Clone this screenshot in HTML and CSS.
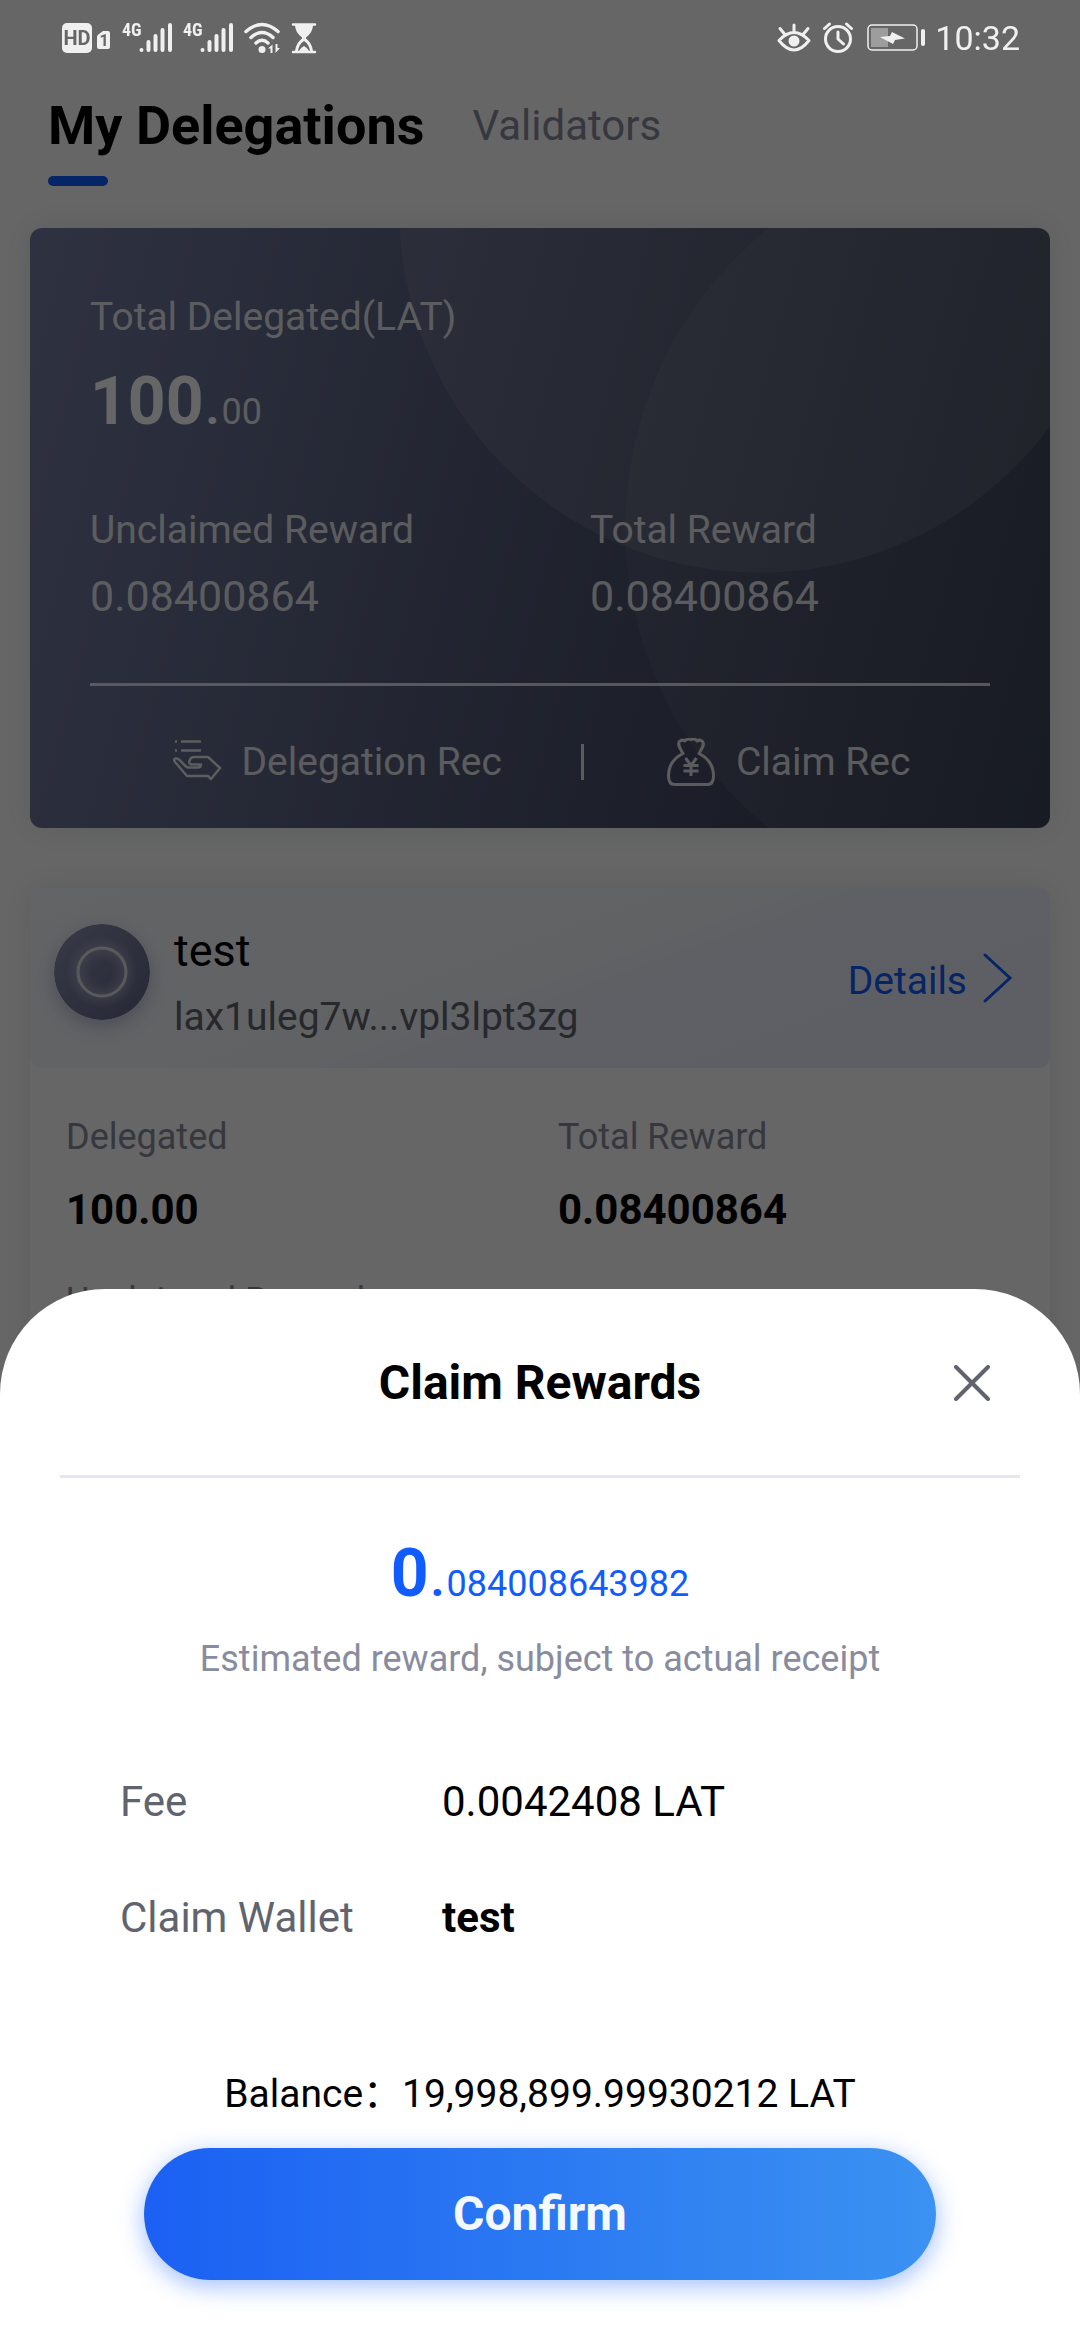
FILE: index.html
```html
<!DOCTYPE html>
<html lang="en">
<head>
<meta charset="utf-8">
<meta name="viewport" content="width=device-width, initial-scale=1">
<title>My Delegations</title>
<link rel="stylesheet" href="styles.css">
</head>
<body>
<header class="status-bar">
  <div class="status-group">
    <svg width="50" height="32" viewBox="0 0 50 32" aria-hidden="true">
      <rect x="0" y="1" width="30" height="30" rx="5" fill="currentColor"/>
      <text x="15" y="23" class="badge-text">HD</text>
      <path d="M35 15q0-2 2-3l4-3h5q2 0 2 2v14q0 2-2 2h-9q-2 0-2-2z" fill="currentColor"/>
      <text x="42" y="24" class="badge-text badge-text-small">1</text>
    </svg>
    <svg width="51" height="44" viewBox="0 -6 51 44" aria-hidden="true">
      <text x="0" y="14" class="network-text">4G</text>
      <path d="M19.500 28v0M26.500 20v8M33.500 14v14M40.500 8v20M48 3v25" class="bars"/>
    </svg>
    <svg width="51" height="44" viewBox="0 -6 51 44" aria-hidden="true">
      <text x="0" y="14" class="network-text">4G</text>
      <path d="M19.500 28v0M26.500 20v8M33.500 14v14M40.500 8v20M48 3v25" class="bars"/>
    </svg>
    <svg width="36" height="32" viewBox="0 0 36 32" aria-hidden="true">
      <path d="M2 9.500q16-14 32 0M7 15.500q11-10 22 0M12 21q6-5.500 12 0" fill="none" stroke="currentColor" stroke-width="3.500" stroke-linecap="round"/>
      <circle cx="18" cy="27.500" r="3.500" fill="currentColor"/>
      <path d="M24 26.500l4.500-4v8.500h-2v-4.500zM36 26l-4.500 5v-9h2v4z" fill="currentColor"/>
    </svg>
    <svg width="28" height="32" viewBox="0 0 28 32" aria-hidden="true">
      <path d="M3 2.500h22M3 30h22" stroke="currentColor" stroke-width="2.500" stroke-linecap="round"/>
      <path d="M5 3h18q0 7-7 12.500v1Q22 21 23 29h-3q-1-7-6-10-5 3-6 10H5q1-8 7-12.500v-1Q5 10 5 3z" fill="currentColor"/>
      <path d="M9 29q1-3 5-5 4 2 5 5z" fill="currentColor"/>
    </svg>
  </div>
  <div class="status-group">
    <svg width="34" height="32" viewBox="0 0 34 32" aria-hidden="true">
      <path d="M2 18.500Q17 2.500 32 18.500 17 37.500 2 18.500zM17 9V3M7.500 12L3 6.500M26.500 12L31 6.500" fill="none" stroke="currentColor" stroke-width="3" stroke-linecap="round" stroke-linejoin="round"/>
      <circle cx="17" cy="19" r="5.500" fill="currentColor"/>
    </svg>
    <svg width="36" height="32" viewBox="0 0 36 32" aria-hidden="true">
      <circle cx="17" cy="17" r="12.500" fill="none" stroke="currentColor" stroke-width="3"/>
      <path d="M17 10v7l5.500 5M3.500 6.500L8.500 2M30.500 6.500L25.500 2" fill="none" stroke="currentColor" stroke-width="3" stroke-linecap="round" stroke-linejoin="round"/>
    </svg>
    <svg width="58" height="32" viewBox="0 0 58 32" aria-hidden="true">
      <rect x="1" y="3" width="49" height="25" rx="4" fill="none" stroke="currentColor" stroke-width="1.500"/>
      <rect x="4" y="6" width="17" height="19" fill="currentColor" opacity=".4"/>
      <path d="M13 15l10-1 2-4 13 6.500-10 1.500-2 4z" fill="currentColor"/>
      <rect x="54" y="7" width="4" height="17" rx="2" fill="currentColor"/>
    </svg>
    <time class="clock">10:32</time>
  </div>
</header>

<main class="page">
  <nav class="tabs">
    <button type="button" class="tab tab-active">My Delegations</button>
    <button type="button" class="tab">Validators</button>
  </nav>

  <section class="summary">
    <h2 class="summary-label">Total Delegated(LAT)</h2>
    <p class="amount summary-total"><strong>100<span class="point">.</span></strong><span class="decimals">00</span></p>
    <dl class="summary-stats">
      <div><dt class="summary-label">Unclaimed Reward</dt><dd>0.08400864</dd></div>
      <div><dt class="summary-label">Total Reward</dt><dd>0.08400864</dd></div>
    </dl>
    <div class="summary-actions">
      <a href="#delegations" class="record-link">
        <svg width="54" height="48" viewBox="-3 0 54 48" aria-hidden="true">
          <path d="M2 3.500h2M8 3.500h20M2 12.500h2M8 12.500h20" stroke="currentColor" stroke-width="2.500" fill="none"/>
          <path d="M28 26.500H18.500q-3-.5-2-3.500 1-4 5-4H35L47 30 38 41l-3-3H14L2 24q-2-3 .5-3.500 2-.5 4 1.500l6 6q2 2 5 1.500h7.500q3 0 3-3z" fill="none" stroke="currentColor" stroke-width="2.500" stroke-linejoin="round"/>
        </svg>
        Delegation Rec
      </a>
      <span class="summary-separator"></span>
      <a href="#claims" class="record-link">
        <svg width="54" height="48" viewBox="-3 0 54 48" aria-hidden="true">
          <path d="M16 15.500C13 10 10 6.500 12.500 3.500q2.500-2.500 5.500-.5 2-3 6-1.500 4-1.500 6 1.500 3-2 5.500.5c2.500 3-.5 6.500-3.500 12C41 20 46.500 28 46.500 38q0 8.500-6 8.500h-33q-6 0-6-8.500C1.500 28 7 20 16 15.500z" fill="none" stroke="currentColor" stroke-width="3" stroke-linejoin="round"/>
          <path d="M18.500 20l5.500 7.500 5.500-7.500M24 27.500V38M16.500 27.500h15M16.500 33h15" fill="none" stroke="currentColor" stroke-width="3"/>
        </svg>
        Claim Rec
      </a>
    </div>
  </section>

  <article class="delegation">
    <header class="delegation-head">
      <svg class="avatar" width="96" height="96" viewBox="0 0 96 96" aria-hidden="true">
        <defs>
          <linearGradient id="avatar-fill" x1="0" y1="0" x2="1" y2="1">
            <stop offset="0" stop-color="#8c91b4"/><stop offset="1" stop-color="#5f6485"/>
          </linearGradient>
          <radialGradient id="avatar-glow">
            <stop offset=".3" stop-color="#aab0c4" stop-opacity="0"/>
            <stop offset=".65" stop-color="#aab0c4" stop-opacity=".6"/>
            <stop offset="1" stop-color="#aab0c4" stop-opacity="0"/>
          </radialGradient>
        </defs>
        <circle cx="48" cy="48" r="48" fill="url(#avatar-fill)"/>
        <circle cx="48" cy="48" r="36" fill="url(#avatar-glow)"/>
        <circle cx="48" cy="48" r="24" fill="none" stroke="#dcdfe0" stroke-width="3"/>
      </svg>
      <div class="wallet">
        <h3>test</h3>
        <p>lax1uleg7w...vpl3lpt3zg</p>
      </div>
      <a href="#details" class="details-link">
        Details
        <svg width="33" height="54" viewBox="0 0 33 54" aria-hidden="true">
          <path d="M4 4l25 23L4 50" fill="none" stroke="currentColor" stroke-width="3" stroke-linecap="round"/>
        </svg>
      </a>
    </header>
    <dl class="delegation-stats">
      <div><dt>Delegated</dt><dd>100.00</dd></div>
      <div><dt>Total Reward</dt><dd>0.08400864</dd></div>
      <div><dt>Unclaimed Reward</dt></div>
    </dl>
  </article>
</main>

<div class="backdrop">
  <section class="sheet" role="dialog" aria-modal="true" aria-labelledby="sheet-title">
    <header class="sheet-head">
      <h1 id="sheet-title">Claim Rewards</h1>
      <button type="button" class="close" aria-label="Close">
        <svg width="36" height="36" viewBox="0 0 36 36" aria-hidden="true">
          <path d="M2 2l32 32M34 2L2 34" stroke="currentColor" stroke-width="4" stroke-linecap="round"/>
        </svg>
      </button>
    </header>
    <p class="amount reward"><strong>0<span class="point">.</span></strong><span class="decimals">084008643982</span></p>
    <p class="reward-note">Estimated reward, subject to actual receipt</p>
    <dl class="claim-info">
      <dt>Fee</dt><dd>0.0042408 LAT</dd>
      <dt>Claim Wallet</dt><dd><strong>test</strong></dd>
    </dl>
    <p class="balance">Balance：19,998,899.99930212 LAT</p>
    <button type="button" class="confirm">Confirm</button>
  </section>
</div>
</body>
</html>
```
FILE: styles.css
```css
* {
  box-sizing: border-box;
  margin: 0;
  padding: 0;
}

body {
  background: #fff;
  color: #000;
  font-family: Roboto, "Noto Sans CJK SC", sans-serif;
  font-size: 39px;
  line-height: 48px;
}

button {
  border: 0;
  background: none;
  font: inherit;
  color: inherit;
}

a {
  color: inherit;
  text-decoration: none;
}

svg {
  display: block;
  flex: none;
}

/* Status bar stays bright above the dimmed page */
.status-bar {
  position: relative;
  z-index: 2;
  display: flex;
  justify-content: space-between;
  height: 76px;
  padding: 0 60px 0 62px;
  color: #f0f0f0;
}

.status-group {
  display: flex;
  align-items: center;
  gap: 10px;
}

.clock {
  font-size: 34px;
}

.badge-text {
  fill: #666;
  font-size: 20px;
  font-weight: 700;
  text-anchor: middle;
}

.badge-text-small {
  font-size: 16px;
}

.network-text {
  fill: currentColor;
  font-family: "Roboto Condensed", "Liberation Sans Narrow", "DejaVu Sans Condensed", Roboto, sans-serif;
  font-size: 18px;
  font-weight: 700;
}

.bars {
  fill: none;
  stroke: currentColor;
  stroke-width: 4;
  stroke-linecap: round;
}

/* Large whole part followed by small decimals */
.amount {
  font-size: 66px;
  line-height: 78px;
}

.point {
  margin: 0 2px;
  font-size: 48px;
  line-height: 48px;
}

.decimals {
  font-size: 36px;
  line-height: 36px;
}

.page {
  padding: 18px 30px 0;
}

.tabs {
  display: flex;
  align-items: flex-start;
  gap: 48px;
  padding: 0 18px;
}

.tab {
  color: #898c9e;
  font-size: 42px;
  line-height: 64px;
}

.tab-active {
  color: #000;
  font-size: 54px;
  font-weight: 700;
}

.tab-active::after {
  content: "";
  display: block;
  width: 60px;
  height: 10px;
  margin-top: 18px;
  border-radius: 5px;
  background: #105cfe;
}

.summary {
  margin-top: 42px;
  padding: 65px 60px 0;
  border-radius: 12px;
  background:
    radial-gradient(circle 361px at calc(100% - 290px) -16px, rgba(255, 255, 255, .09) 360px, transparent 361px),
    radial-gradient(circle 386px at calc(100% - 39px) 300px, rgba(255, 255, 255, .05) 385px, transparent 386px),
    linear-gradient(105deg, #757ca3, #525a76 50%, #434a62 75%, #323a4e);
  box-shadow: 0 0 30px rgba(60, 66, 90, .12);
  color: #fff;
}

.summary-label {
  color: rgba(255, 255, 255, .85);
  font-size: 39px;
  font-weight: 400;
}

.summary-total {
  margin-top: 22px;
}

.summary-total .decimals {
  color: rgba(255, 255, 255, .85);
}

.summary-stats {
  display: grid;
  grid-template-columns: 1fr 1fr;
  gap: 100px;
  margin-top: 65px;
}

.summary-stats dd {
  margin-top: 18px;
  color: rgba(255, 255, 255, .85);
  font-size: 43px;
}

.summary-actions {
  display: flex;
  justify-content: space-evenly;
  align-items: center;
  margin-top: 63px;
  padding: 52px 0 42px;
  border-top: 3px solid rgba(255, 255, 255, .8);
  color: rgba(255, 255, 255, .85);
}

.record-link {
  display: flex;
  align-items: center;
  gap: 18px;
}

.summary-separator {
  width: 3px;
  height: 36px;
  background: currentColor;
}

.delegation {
  margin-top: 60px;
  padding-bottom: 240px;
  border-radius: 12px;
  background: #fff;
  box-shadow: 0 0 30px rgba(60, 66, 90, .12);
}

.delegation-head {
  display: flex;
  align-items: flex-start;
  gap: 24px;
  height: 180px;
  padding: 36px 36px 0 24px;
  border-radius: 12px;
  background: linear-gradient(160deg, #f5f9fd, #f1f6fb 48%, #eaeffc 58%, #ebedfa);
}

.avatar {
  border-radius: 50%;
  box-shadow: 0 6px 18px rgba(80, 90, 150, .35);
}

.wallet {
  flex: 1;
  color: #61646e;
}

.wallet h3 {
  margin-bottom: 15px;
  color: #000;
  font-size: 45px;
  font-weight: 400;
  line-height: 54px;
}

.details-link {
  display: flex;
  align-items: flex-end;
  align-self: center;
  gap: 14px;
  margin-top: -36px;
  color: #105cfe;
}

.delegation-stats {
  display: grid;
  grid-template-columns: 1fr 1fr;
  gap: 46px 36px;
  padding: 48px 36px 0;
}

.delegation-stats dt {
  color: #898c9e;
  font-size: 36px;
  line-height: 42px;
}

.delegation-stats dd {
  margin-top: 28px;
  font-size: 42px;
  font-weight: 700;
}

/* Dimmed layer with the claim sheet at its foot */
.backdrop {
  position: fixed;
  inset: 0;
  z-index: 1;
  display: flex;
  flex-direction: column;
  justify-content: flex-end;
  background: rgba(0, 0, 0, .6);
}

.sheet {
  display: flex;
  flex-direction: column;
  padding: 0 60px 60px;
  border-radius: 105px 105px 0 0;
  background: #fff;
  text-align: center;
}

.sheet-head {
  display: grid;
  grid-template-columns: 1fr auto 1fr;
  align-items: center;
  padding: 64px 30px 62px;
  border-bottom: 3px solid #e4e7f3;
}

.sheet-head h1 {
  grid-column: 2;
  font-size: 48px;
  line-height: 60px;
}

.close {
  justify-self: end;
  color: #61646e;
}

.reward {
  margin-top: 57px;
  color: #105cfe;
}

.reward-note {
  margin-top: 25px;
  color: #898c9e;
  font-size: 36px;
  line-height: 42px;
}

.claim-info {
  display: grid;
  grid-template-columns: 322px 1fr;
  row-gap: 68px;
  margin: 98px 60px 0;
  font-size: 42px;
  text-align: left;
}

.claim-info dt {
  color: #61646e;
}

.balance {
  margin-top: 128px;
}

.confirm {
  margin: 30px 84px 0;
  border-radius: 66px;
  background: linear-gradient(90deg, #1b60f3, #3b92f1);
  box-shadow: 0 6px 24px rgba(16, 92, 254, .4);
  color: #f4f8ff;
  font-size: 48px;
  font-weight: 700;
  line-height: 132px;
}
```
